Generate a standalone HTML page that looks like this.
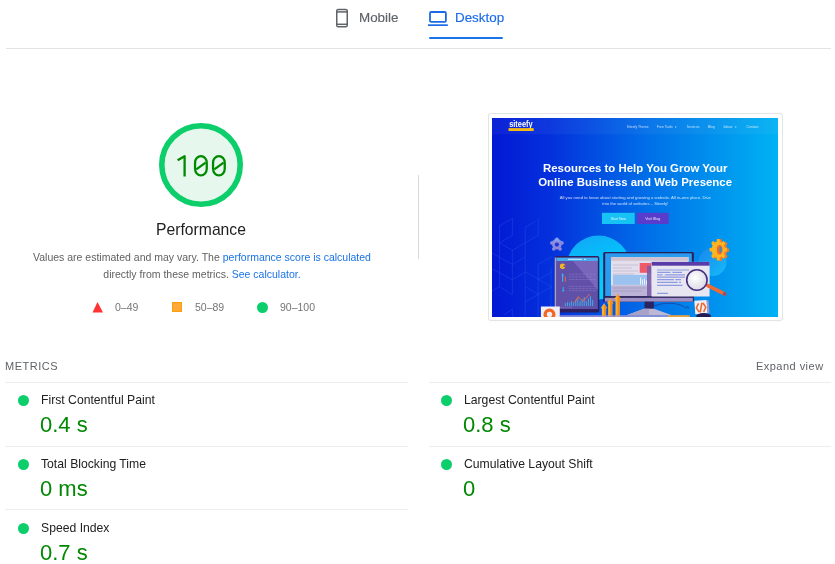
<!DOCTYPE html>
<html><head><meta charset="utf-8">
<style>
.a{will-change:transform;}
html,body{margin:0;padding:0;background:#fff;width:835px;height:564px;overflow:hidden;position:relative;font-family:"Liberation Sans",sans-serif;}
.a{position:absolute;white-space:nowrap;}
.tab{font-size:13.4px;color:#5f6368;-webkit-text-stroke:0.15px #5f6368;}
.tab.on{-webkit-text-stroke:0.15px #1a6be8;}
.tab.on{color:#1a6be8;}
.hr{position:absolute;height:1px;background:#e0e0e0;}
.desc{font-size:10.5px;color:#616161;text-align:center;}
.desc a{color:#1a73e8;text-decoration:none;}
.leg{font-size:10.5px;color:#757575;}
.mlabel{font-size:12.2px;color:#212121;}
.mval{font-size:22px;color:#008800;}
.dot{position:absolute;width:11px;height:11px;border-radius:50%;background:#0cce6b;}
.mline{position:absolute;height:1px;background:#ededed;}
</style></head><body>

<!-- tabs -->
<svg class="a" style="left:335px;top:8px" width="14" height="21" viewBox="0 0 14 21">
  <rect x="1.75" y="1.45" width="10.5" height="17.4" rx="1.6" fill="none" stroke="#5f6368" stroke-width="1.5"/>
  <line x1="1.75" y1="3.9" x2="12.25" y2="3.9" stroke="#5f6368" stroke-width="1.5"/>
  <line x1="1.75" y1="16.3" x2="12.25" y2="16.3" stroke="#5f6368" stroke-width="1.5"/>
</svg>
<div class="a tab" style="left:358.6px;top:9.7px">Mobile</div>
<svg class="a" style="left:428px;top:10px" width="21" height="17" viewBox="0 0 21 17">
  <rect x="2" y="2" width="15.9" height="9.9" rx="1.2" fill="none" stroke="#1a6be8" stroke-width="1.8"/>
  <rect x="0" y="14.3" width="19.8" height="1.7" fill="#1a6be8"/>
</svg>
<div class="a tab on" style="left:455px;top:9.7px">Desktop</div>
<div class="a" style="left:429px;top:37px;width:74px;height:2px;background:#1a73e8;border-radius:1px"></div>
<div class="hr" style="left:6px;top:48px;width:825px;background:#e3e3e3"></div>

<!-- gauge -->
<svg class="a" style="left:159px;top:123px" width="84" height="84" viewBox="0 0 84 84">
  <circle cx="42" cy="42" r="39.2" fill="#e6f8ee" stroke="#0cce6b" stroke-width="5.6"/>
</svg>
<svg class="a" style="left:170px;top:150px" width="62" height="32" viewBox="170 150 62 32">
  <g fill="none" stroke="#008a00" stroke-width="2.3">
    <path d="M177.6 160.2 L184.6 156.2 V176.6" stroke-linejoin="round"/>
    <rect x="195.05" y="156.15" width="11.7" height="19.3" rx="5.85" ry="6.6"/>
    <path d="M196.3 169.4 L205.6 162.6"/>
    <rect x="213.05" y="156.15" width="11.7" height="19.3" rx="5.85" ry="6.6"/>
    <path d="M214.3 169.4 L223.6 162.6"/>
  </g>
</svg>
<div class="a" style="left:101px;top:220.8px;width:200px;text-align:center;font-size:15.7px;color:#212121">Performance</div>
<div class="a desc" style="left:1.5px;top:248.6px;width:400px;line-height:17px">Values are estimated and may vary. The <a>performance score is calculated</a><br>directly from these metrics. <a>See calculator.</a></div>

<!-- legend -->
<svg class="a" style="left:92px;top:301px" width="12" height="12" viewBox="0 0 12 12"><polygon points="5.5,1 11,11.5 0.5,11.5" fill="#ff3333"/></svg>
<div class="a leg" style="left:115px;top:301px">0–49</div>
<div class="a" style="left:172px;top:302px;width:10px;height:10px;box-sizing:border-box;background:#ffa93a;border:1px solid #ff9c0a"></div>
<div class="a leg" style="left:195px;top:301px">50–89</div>
<div class="a" style="left:257px;top:302px;width:11px;height:11px;border-radius:50%;background:#0cce6b"></div>
<div class="a leg" style="left:280px;top:301px">90–100</div>

<!-- divider -->
<div class="a" style="left:418px;top:175px;width:1px;height:84px;background:#d9d9d9"></div>

<!-- screenshot -->
<div class="a" style="left:489px;top:114px;width:293px;height:206px;background:#fff;border-radius:2px;box-shadow:0 0 0 1px #e4e4e4, 0 1px 2px rgba(0,0,0,0.06)"></div>
<svg class="a" style="left:492px;top:118px" width="286" height="199" viewBox="0 0 286 199">
<defs>
  <linearGradient id="bg" x1="0" y1="0" x2="1" y2="0">
    <stop offset="0" stop-color="#0318d4"/>
    <stop offset="0.2" stop-color="#0430dc"/>
    <stop offset="0.55" stop-color="#0070e8"/>
    <stop offset="1" stop-color="#00b2f3"/>
  </linearGradient>
  <linearGradient id="scr" x1="0" y1="0" x2="1" y2="1">
    <stop offset="0" stop-color="#5a4aa8"/>
    <stop offset="1" stop-color="#7a62b8"/>
  </linearGradient>
  <radialGradient id="mag" cx="0.4" cy="0.4" r="0.7">
    <stop offset="0" stop-color="#ffffff"/>
    <stop offset="1" stop-color="#d8d6e4"/>
  </radialGradient>
  <linearGradient id="cyc" x1="0" y1="0" x2="0.4" y2="1">
    <stop offset="0" stop-color="#14a4f6"/>
    <stop offset="0.6" stop-color="#02c6fc"/>
    <stop offset="1" stop-color="#00d0ff"/>
  </linearGradient>
  <linearGradient id="gbc" x1="0" y1="0" x2="1" y2="1">
    <stop offset="0" stop-color="#1a86ee"/>
    <stop offset="1" stop-color="#14bcf8"/>
  </linearGradient>
</defs>
<rect width="286" height="199" fill="url(#bg)"/>
<rect width="286" height="16.3" fill="#fff" opacity="0.045"/>
<!-- hex pattern -->
<g stroke="#3f72f4" stroke-width="0.55" fill="none" opacity="0.45">
  <path d="M7.5 107.5 V168.7 M20.4 100 V117.3 M20.4 131.5 V176.5 M20.4 191.2 V199 M33.2 109.3 V199 M46.1 100 V117.3 M46.1 146.5 V199 M59 150 V199"/>
  <path d="M7.5 108 L20.4 100.5 M33.2 109.3 L43 103.5 M20.4 117.3 L7.5 124.8 L20.4 132.3 L46.1 117.3"/>
  <path d="M0 135 L20.4 146.5 L33.2 139 M46.1 146.5 L60 138.5"/>
  <path d="M0 150.7 L20.3 161.7 L33.6 153.9 L60 169.1 M46.1 161.7 L60 153.9"/>
  <path d="M0 172.8 L7.4 168.7 L20.3 176.5 M33.6 168.7 L46.1 176.5 L60 168.7 M33.6 183.9 L46.1 176.5 M12 196.8 L20.3 191.2"/>
</g>
<!-- logo -->
<text x="17.2" y="8.9" font-family="Liberation Sans" font-weight="bold" font-size="8.6" fill="#fff" textLength="23.4" lengthAdjust="spacingAndGlyphs">siteefy</text>
<rect x="16.5" y="10.1" width="25.2" height="2.9" fill="#f5b912"/>
<!-- nav -->
<g font-family="Liberation Sans" font-size="3.5" fill="#fff" opacity="0.72">
  <text x="134.8" y="10.2" textLength="21.8" lengthAdjust="spacingAndGlyphs">Siteefy Theme</text>
  <text x="164.8" y="10.2" textLength="16" lengthAdjust="spacingAndGlyphs">Free Tools</text>
  <text x="183.3" y="9.9" font-size="2.6">▾</text>
  <text x="194.7" y="10.2" textLength="12.8" lengthAdjust="spacingAndGlyphs">Services</text>
  <text x="216" y="10.2" textLength="6.8" lengthAdjust="spacingAndGlyphs">Blog</text>
  <text x="231.4" y="10.2" textLength="9" lengthAdjust="spacingAndGlyphs">Ideas</text>
  <text x="243.3" y="9.9" font-size="2.6">▾</text>
  <text x="254.4" y="10.2" textLength="12.2" lengthAdjust="spacingAndGlyphs">Contact</text>
</g>
<!-- title -->
<g font-family="Liberation Sans" font-weight="bold" font-size="11.4" fill="#fff">
  <text x="51" y="54.1" textLength="184.4" lengthAdjust="spacingAndGlyphs">Resources to Help You Grow Your</text>
  <text x="46.2" y="68.4" textLength="193.8" lengthAdjust="spacingAndGlyphs">Online Business and Web Presence</text>
</g>
<g font-family="Liberation Sans" font-size="4.3" fill="#fff" opacity="0.8">
  <text x="67.7" y="80.7" textLength="151.2" lengthAdjust="spacingAndGlyphs">All you need to know about starting and growing a website. All in-one place. Dive</text>
  <text x="110.3" y="86.9" textLength="66" lengthAdjust="spacingAndGlyphs">into the world of websites – Siteefy!</text>
</g>
<!-- buttons -->
<rect x="110" y="94.8" width="32.7" height="11.2" fill="#17c3f4"/>
<rect x="144.9" y="94.8" width="31.8" height="11.2" fill="#5a3ccc"/>
<g font-family="Liberation Sans" font-size="3.6" fill="#fff" opacity="0.85">
  <text x="118.7" y="101.6" textLength="15.4" lengthAdjust="spacingAndGlyphs">Start Now</text>
  <text x="153.2" y="101.6" textLength="15" lengthAdjust="spacingAndGlyphs">Visit Blog</text>
</g>
<!-- cyan circle -->
<circle cx="106.5" cy="149.5" r="32" fill="url(#cyc)"/>
<circle cx="220.5" cy="144" r="14" fill="url(#gbc)"/>
<!-- purple gear -->
<g transform="translate(64.9,126.6)" fill="#8c88dc">
  <circle r="4.8"/><circle cx="0.00" cy="-5.40" r="1.8"/><circle cx="5.14" cy="-1.67" r="1.8"/><circle cx="3.17" cy="4.37" r="1.8"/><circle cx="-3.17" cy="4.37" r="1.8"/><circle cx="-5.14" cy="-1.67" r="1.8"/>
  <path d="M-6.5 -2 L0 -7 L6.5 -2 L0 -3.5Z" fill="#88aef0" opacity="0.7"/>
  <circle r="2.1" fill="#1838d8"/>
</g>
<!-- tablet -->
<rect x="62.7" y="138.1" width="44.6" height="56.4" rx="2" fill="#2d1f5e"/>
<rect x="62.7" y="139.5" width="1.8" height="53.5" fill="#a8a0cc"/>
<rect x="64.5" y="139.7" width="41.3" height="51.6" fill="#6150a8"/>
<path d="M78 139.7 H105.8 V172 Z" fill="#8a78c8" opacity="0.55"/>
<rect x="64.5" y="139.7" width="41.3" height="3.2" fill="#46b0f2"/>
<rect x="76" y="140.8" width="14" height="1.1" fill="#d8f0ff" opacity="0.9"/>
<rect x="92" y="140.8" width="2" height="1.1" fill="#d8f0ff" opacity="0.9"/>
<circle cx="70.6" cy="148.2" r="2.7" fill="#f5b820"/>
<path d="M70.6 148.2 L73.6 146.6 L73.6 149.6Z" fill="#6150a8"/>
<path d="M72.2 147.2 L73.4 147.9" stroke="#f07a30" stroke-width="0.6"/>
<path d="M70.6 155.1 l1.4 2.4 h-0.8 v6.2 h-1.2 v-6.2 h-0.8z" fill="#3ab0f0"/>
<path d="M73.3 158.3 v5.4" stroke="#f2663a" stroke-width="1"/>
<path d="M71.2 169 v4.2 M70.2 172.2 l1 1.3 l1 -1.3" stroke="#3ab0f0" stroke-width="1" fill="none"/>
<g stroke="#a898d8" stroke-width="0.55" opacity="0.75" stroke-dasharray="0.9 0.5">
  <path d="M77 156.2 H104 M77 158.9 H100 M77 161.5 H104 M77 168.4 H104.5 M77 170.6 H104.5 M77 172.7 H104.5"/>
</g>
<g stroke="#38b4f2" stroke-width="0.9">
  <path d="M73.3 188.1 v-3.0 M75.4 188.1 v-4.0 M77.5 188.1 v-3.5 M79.6 188.1 v-5.0 M81.7 188.1 v-4.0 M83.8 188.1 v-6.0 M85.9 188.1 v-8.0 M88.0 188.1 v-5.0 M90.1 188.1 v-7.0 M92.2 188.1 v-9.0 M94.3 188.1 v-5.0 M96.4 188.1 v-8.0 M98.5 188.1 v-10.0 M100.6 188.1 v-6.0"/>
</g>
<path d="M82.9 184.4 L86.1 178.6 L90.9 183.3 L97.8 175.9" stroke="#f26b3a" stroke-width="0.9" fill="none"/>
<g stroke="#a898d8" stroke-width="0.5" opacity="0.6"><path d="M67 189.2 H80"/></g>
<rect x="64.5" y="191.3" width="41.3" height="2.7" fill="#2d1f5e"/>
<!-- small box bottom-left -->
<rect x="48.9" y="188.5" width="18.9" height="10.5" fill="#f0eff6"/>
<circle cx="57.5" cy="196.4" r="4.35" stroke="#f2662a" stroke-width="3.3" fill="none"/>
<!-- monitor -->
<rect x="111.2" y="133.9" width="90.6" height="50" rx="1.5" fill="#2a2058"/>
<rect x="113.2" y="135.3" width="86.6" height="42.9" fill="#2a9cf0"/>
<rect x="119" y="139.2" width="77.6" height="39" fill="#e2deec"/>
<rect x="119" y="139.2" width="77.6" height="3.6" fill="#d2c2d0"/>
<g stroke="#c4bcd2" stroke-width="0.9">
  <path d="M121 147 H146 M121 150 H140 M121 153 H146 M121 156 H142"/>
</g>
<rect x="119" y="167.4" width="77.6" height="10.8" fill="#bcb4d6"/>
<g stroke="#9a90c0" stroke-width="0.6"><path d="M121 170 H154 M121 173 H150"/></g>
<rect x="147.7" y="145" width="11.3" height="9.8" fill="#ee5a6a"/>
<rect x="121" y="156.9" width="35" height="10" fill="#9cc2f0"/>
<g stroke="#f4f4ff" stroke-width="0.9"><path d="M148.5 166.5 v-7 M150.5 166.5 v-5 M152.5 166.5 v-6 M154.5 166.5 v-4"/></g>
<rect x="155" y="147.8" width="4.6" height="32" fill="#7a5ca8" opacity="0.9"/>
<rect x="112.2" y="178.2" width="89.6" height="1.6" fill="#2a2058"/>
<rect x="112.8" y="179.8" width="88" height="3.9" fill="#9c90c4"/>
<rect x="152.5" y="183.7" width="9.4" height="7.2" fill="#2a2462"/>
<path d="M152 190.7 L162 190.7 L180 197.2 L134.5 197.2 Z" fill="#bdb8d6"/><path d="M152 190.7 L157 190.7 L157 197.2 L134.5 197.2 Z" fill="#a8a2c8"/>
<path d="M162 188 C172 184 186 184 194 190 M194 190 c1 -2 3 -2 2 1" stroke="#2a2a80" stroke-width="0.6" fill="none"/>
<!-- browser overlay -->
<rect x="159.6" y="143.9" width="58" height="34.6" fill="#e8e6f1"/>
<rect x="159.6" y="143.9" width="58" height="3.8" fill="#5a3ca8"/>

<g stroke="#8e9be0" stroke-width="1.2">
  <path d="M165.1 152.0 H197.2 M165.1 154.4 H178.5 M180.4 154.4 H190.0 M165.1 156.8 H170.8 M172.8 156.8 H192.9 M165.1 159.2 H192.9 M165.1 161.6 H181.9 M183.3 161.6 H189.0 M165.1 164.4 H185.7 M187.1 164.4 H189.0 M165.1 167.3 H190.5 M165.1 175.4 H176.1"/>
</g>
<!-- magnifier -->
<line x1="215.8" y1="167.6" x2="232.6" y2="175.9" stroke="#f06a34" stroke-width="3.8" stroke-linecap="round"/><circle cx="232.6" cy="175.9" r="1.9" fill="#9a4a6a"/>
<circle cx="204.9" cy="162" r="10.2" fill="url(#mag)" stroke="#46307e" stroke-width="1.6"/>
<!-- orange gear -->
<g transform="translate(227.2,131.7) scale(0.8,1)">
  <g fill="#ee7a2a" transform="translate(1.6,0.4)"><rect x="-1.9" y="-10.8" width="3.8" height="4" rx="0.8" transform="rotate(0)"/><rect x="-1.9" y="-10.8" width="3.8" height="4" rx="0.8" transform="rotate(45)"/><rect x="-1.9" y="-10.8" width="3.8" height="4" rx="0.8" transform="rotate(90)"/><rect x="-1.9" y="-10.8" width="3.8" height="4" rx="0.8" transform="rotate(135)"/><rect x="-1.9" y="-10.8" width="3.8" height="4" rx="0.8" transform="rotate(180)"/><rect x="-1.9" y="-10.8" width="3.8" height="4" rx="0.8" transform="rotate(225)"/><rect x="-1.9" y="-10.8" width="3.8" height="4" rx="0.8" transform="rotate(270)"/><rect x="-1.9" y="-10.8" width="3.8" height="4" rx="0.8" transform="rotate(315)"/><circle r="8.6"/></g>
  <g fill="#fbb520" transform="translate(-1.2,0)"><rect x="-1.9" y="-10.8" width="3.8" height="3.6" rx="0.8" transform="rotate(0)"/><rect x="-1.9" y="-10.8" width="3.8" height="3.6" rx="0.8" transform="rotate(45)"/><rect x="-1.9" y="-10.8" width="3.8" height="3.6" rx="0.8" transform="rotate(90)"/><rect x="-1.9" y="-10.8" width="3.8" height="3.6" rx="0.8" transform="rotate(135)"/><rect x="-1.9" y="-10.8" width="3.8" height="3.6" rx="0.8" transform="rotate(180)"/><rect x="-1.9" y="-10.8" width="3.8" height="3.6" rx="0.8" transform="rotate(225)"/><rect x="-1.9" y="-10.8" width="3.8" height="3.6" rx="0.8" transform="rotate(270)"/><rect x="-1.9" y="-10.8" width="3.8" height="3.6" rx="0.8" transform="rotate(315)"/><circle r="8.3"/></g>
  <ellipse cx="0.6" rx="3.6" ry="4.8" fill="#ee6a2e"/>
  <ellipse cx="1.6" rx="1.3" ry="3.2" fill="#1a92ea"/>
</g>
<!-- code box -->
<g transform="rotate(-4 209 189)">
<rect x="202.8" y="182.3" width="12.3" height="13.6" fill="#f0eef6"/>
<rect x="215.1" y="182.8" width="1.9" height="13" fill="#a898d0"/>
<path d="M206.8 185.2 L204.3 189.6 L206.8 194 M211.3 185.2 L213.8 189.6 L211.3 194 M210.3 184.8 L207.8 194.4" stroke="#f06a2a" stroke-width="1.6" fill="none"/>
</g>
<!-- mouse -->
<ellipse cx="211.6" cy="198" rx="7.4" ry="3" fill="#261c54"/>
<!-- arrows -->
<g><path d="M112 185.2 L115.3 190.2 h-1.1999999999999997 V199 h-4.2 V190.2 h-1.1999999999999997 z" fill="#f9b22a"/><path d="M112 185.2 L115.3 190.2 h-1.1999999999999997 V199 h-2.1 z" fill="#f28c22"/><path d="M118.2 180.6 L121.5 185.6 h-1.1999999999999997 V199 h-4.2 V185.6 h-1.1999999999999997 z" fill="#f9b22a"/><path d="M118.2 180.6 L121.5 185.6 h-1.1999999999999997 V199 h-2.1 z" fill="#f28c22"/><path d="M125.6 175.9 L128.9 180.9 h-1.1999999999999997 V199 h-4.2 V180.9 h-1.1999999999999997 z" fill="#f9b22a"/><path d="M125.6 175.9 L128.9 180.9 h-1.1999999999999997 V199 h-2.1 z" fill="#f28c22"/></g>
<rect x="68" y="197.2" width="128" height="1.8" fill="#a89ad0" opacity="0.8"/>
<rect x="176" y="197.4" width="22" height="1.4" fill="#f9a81e"/>
</svg>

<!-- metrics -->
<div class="a" style="left:5px;top:360px;font-size:11px;color:#5f6368;letter-spacing:0.5px">METRICS</div>
<div class="a" style="left:756px;top:360px;font-size:11px;color:#5f6368;letter-spacing:0.47px">Expand view</div>

<div class="mline" style="left:5px;top:382px;width:403px"></div>
<div class="mline" style="left:429px;top:382px;width:402px"></div>
<div class="mline" style="left:5px;top:446px;width:403px"></div>
<div class="mline" style="left:429px;top:446px;width:402px"></div>
<div class="mline" style="left:5px;top:509px;width:403px"></div>

<div class="dot" style="left:18px;top:395px"></div>
<div class="a mlabel" style="left:41px;top:393px">First Contentful Paint</div>
<div class="a mval" style="left:40.4px;top:411.6px">0.4 s</div>

<div class="dot" style="left:441px;top:395px"></div>
<div class="a mlabel" style="left:464px;top:393px">Largest Contentful Paint</div>
<div class="a mval" style="left:463.4px;top:411.6px">0.8 s</div>

<div class="dot" style="left:18px;top:459px"></div>
<div class="a mlabel" style="left:41px;top:457px">Total Blocking Time</div>
<div class="a mval" style="left:40.4px;top:475.6px">0 ms</div>

<div class="dot" style="left:441px;top:459px"></div>
<div class="a mlabel" style="left:464px;top:457px">Cumulative Layout Shift</div>
<div class="a mval" style="left:463.4px;top:475.6px">0</div>

<div class="dot" style="left:18px;top:523px"></div>
<div class="a mlabel" style="left:41px;top:521px">Speed Index</div>
<div class="a mval" style="left:40.4px;top:539.6px">0.7 s</div>

</body></html>
